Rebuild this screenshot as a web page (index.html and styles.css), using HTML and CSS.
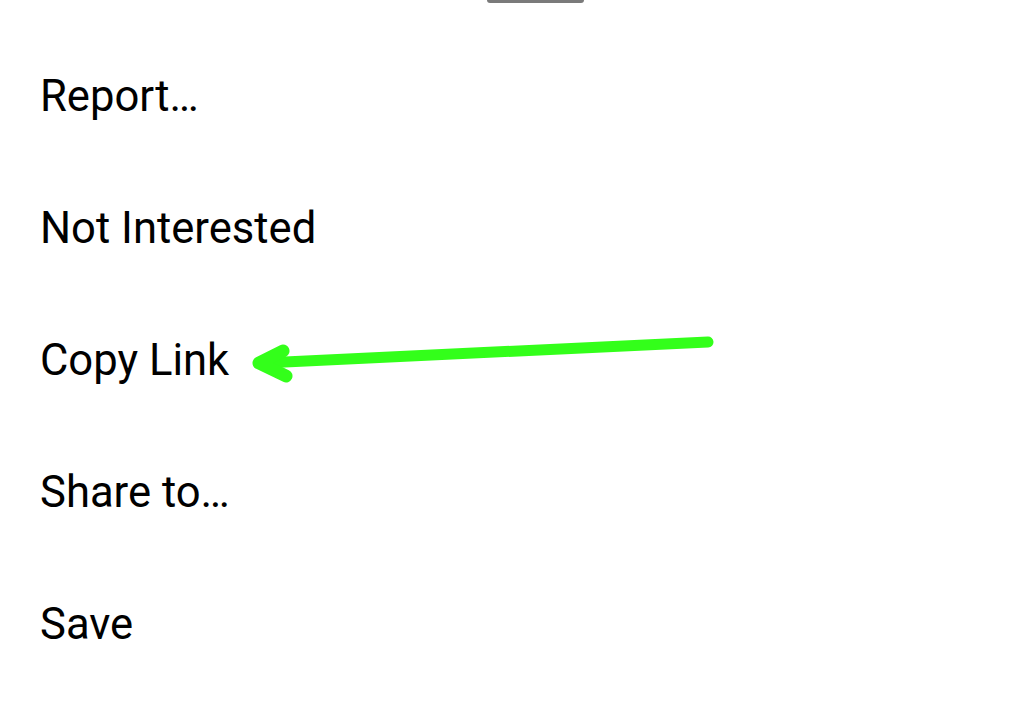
FILE: index.html
```html
<!DOCTYPE html>
<html>
<head>
<meta charset="utf-8">
<link rel="stylesheet" href="styles.css">
</head>
<body>
<div class="sheet">
  <div class="handle-row"><div class="handle"></div></div>
  <ul class="menu">
    <li class="item">Report…</li>
    <li class="item">Not Interested</li>
    <li class="item">Copy Link</li>
    <li class="item">Share to…</li>
    <li class="item">Save</li>
  </ul>
  <svg class="arrow" width="1034" height="720" viewBox="0 0 1034 720">
    <g fill="none" stroke="#33ff1a" stroke-linecap="round" stroke-linejoin="round">
      <path d="M708 342 L264 363" stroke-width="11"/>
      <path d="M283 351 L259 363 L286 376" stroke-width="13"/>
    </g>
  </svg>
</div>
</body>
</html>
```
FILE: styles.css
```css
html, body {
  margin: 0;
  padding: 0;
  background: #ffffff;
}
.sheet {
  position: relative;
  width: 1034px;
  height: 720px;
  overflow: hidden;
  font-family: Roboto, "Liberation Sans", sans-serif;
  color: #000;
}
.handle-row {
  display: flex;
  padding-left: 487px;
  height: 31px;
}
.handle {
  width: 97px;
  height: 3px;
  background: #7a7a7a;
  border-radius: 0 0 3px 3px;
}
.menu {
  list-style: none;
  margin: 0;
  padding: 0 0 0 40px;
}
.item {
  height: 132px;
  line-height: 132px;
  font-size: 43.6px;
  white-space: nowrap;
}
.arrow {
  position: absolute;
  left: 0;
  top: 0;
  pointer-events: none;
}
```
